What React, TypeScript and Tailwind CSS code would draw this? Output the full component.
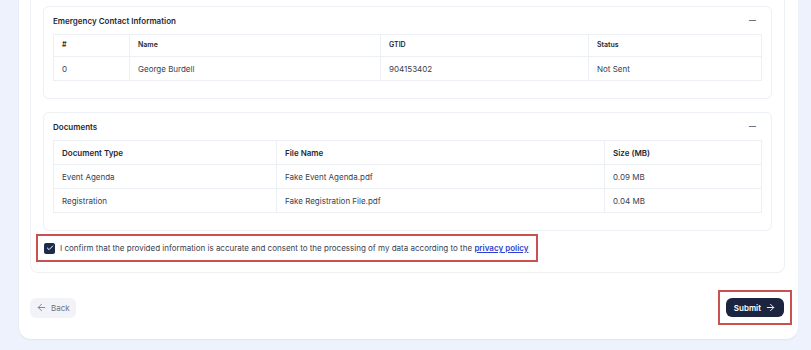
import { ArrowLeft, ArrowRight, Check, Minus } from "lucide-react";

const contacts = [{ idx: "0", name: "George Burdell", gtid: "904153402", status: "Not Sent" }];

const documents = [
  { type: "Event Agenda", file: "Fake Event Agenda.pdf", size: "0.09 MB" },
  { type: "Registration", file: "Fake Registration File.pdf", size: "0.04 MB" },
];

function SectionCard({ title, children, className = "" }: { title: string; children: React.ReactNode; className?: string }) {
  return (
    <div className={`rounded-md border border-[#eceff4] bg-white px-[9px] pb-[17px] ${className}`}>
      <div className="flex h-[27px] items-center justify-between">
        <span className="text-[8px] font-semibold text-[#1f2937]">{title}</span>
        <Minus className="mr-[4px] h-[11px] w-[11px] text-[#6b7280]" strokeWidth={2.2} />
      </div>
      {children}
    </div>
  );
}

export default function App() {
  return (
    <div className="min-h-[350px] bg-[#eef2fc] pl-[19px] pr-[13px] font-['Inter',sans-serif]">
      <div className="h-[339px] rounded-b-xl bg-white pl-[11px] pr-[13px] shadow-[0_1px_2px_rgba(0,0,0,0.06)]">
        {/* Review panel */}
        <div className="rounded-b-lg border border-t-0 border-[#eef0f4] px-[12px] pt-[6px] pb-[10px]">
          <SectionCard title="Emergency Contact Information">
            <table className="w-full table-fixed border-collapse text-[8px] text-[#374151]">
              <colgroup>
                <col className="w-[76px]" />
                <col className="w-[251px]" />
                <col className="w-[208px]" />
                <col />
              </colgroup>
              <thead>
                <tr className="h-[22px]">
                  {["#", "Name", "GTID", "Status"].map((h) => (
                    <th key={h} className="border border-[#eceff3] pl-[8px] text-left text-[7px] font-semibold text-[#1f2937]">
                      {h}
                    </th>
                  ))}
                </tr>
              </thead>
              <tbody>
                {contacts.map((c) => (
                  <tr key={c.gtid} className="h-[24px]">
                    <td className="border border-[#eceff3] pl-[8px]">{c.idx}</td>
                    <td className="border border-[#eceff3] pl-[8px]">{c.name}</td>
                    <td className="border border-[#eceff3] pl-[8px]">{c.gtid}</td>
                    <td className="border border-[#eceff3] pl-[8px]">{c.status}</td>
                  </tr>
                ))}
              </tbody>
            </table>
          </SectionCard>

          <SectionCard title="Documents" className="mt-[13px]">
            <table className="w-full table-fixed border-collapse text-[8px] text-[#374151]">
              <colgroup>
                <col className="w-[223px]" />
                <col className="w-[328px]" />
                <col />
              </colgroup>
              <thead>
                <tr className="h-[24px]">
                  {["Document Type", "File Name", "Size (MB)"].map((h) => (
                    <th key={h} className="border border-[#eceff3] pl-[8px] text-left font-semibold text-[#1f2937]">
                      {h}
                    </th>
                  ))}
                </tr>
              </thead>
              <tbody>
                {documents.map((d) => (
                  <tr key={d.file} className="h-[24px]">
                    <td className="border border-[#eceff3] pl-[8px]">{d.type}</td>
                    <td className="border border-[#eceff3] pl-[8px]">{d.file}</td>
                    <td className="border border-[#eceff3] pl-[8px]">{d.size}</td>
                  </tr>
                ))}
              </tbody>
            </table>
          </SectionCard>

          {/* Consent */}
          <div className="mt-[3px] ml-[-7px] inline-flex h-[28px] items-center gap-[5px] border-2 border-[#c9514f] pl-[6px] pr-[8px]">
            <span className="flex h-[11px] w-[11px] items-center justify-center rounded-[2px] bg-[#1e2a4a]">
              <Check className="h-[8px] w-[8px] text-white" strokeWidth={3} />
            </span>
            <span className="text-[8px] text-[#374151]">
              I confirm that the provided information is accurate and consent to the processing of my data according to the{" "}
              <a href="#" className="font-semibold text-[#2f3fd1] underline">
                privacy policy
              </a>
            </span>
          </div>
        </div>

        {/* Actions */}
        <div className="mt-[17px] flex items-center justify-between">
          <button className="flex h-[20px] items-center gap-[4px] rounded-md bg-[#f1f3f8] px-[6px] text-[8px] text-[#6b7280]">
            <ArrowLeft className="h-[11px] w-[11px]" strokeWidth={1.8} />
            Back
          </button>
          <div className="mr-[-7px] border-2 border-[#c9514f] px-[6px] py-[6px]">
            <button className="flex h-[19px] items-center gap-[4px] rounded-md bg-[#1b2540] px-[8px] text-[8px] font-semibold text-white">
              Submit
              <ArrowRight className="h-[11px] w-[11px]" strokeWidth={2} />
            </button>
          </div>
        </div>
      </div>
    </div>
  );
}
